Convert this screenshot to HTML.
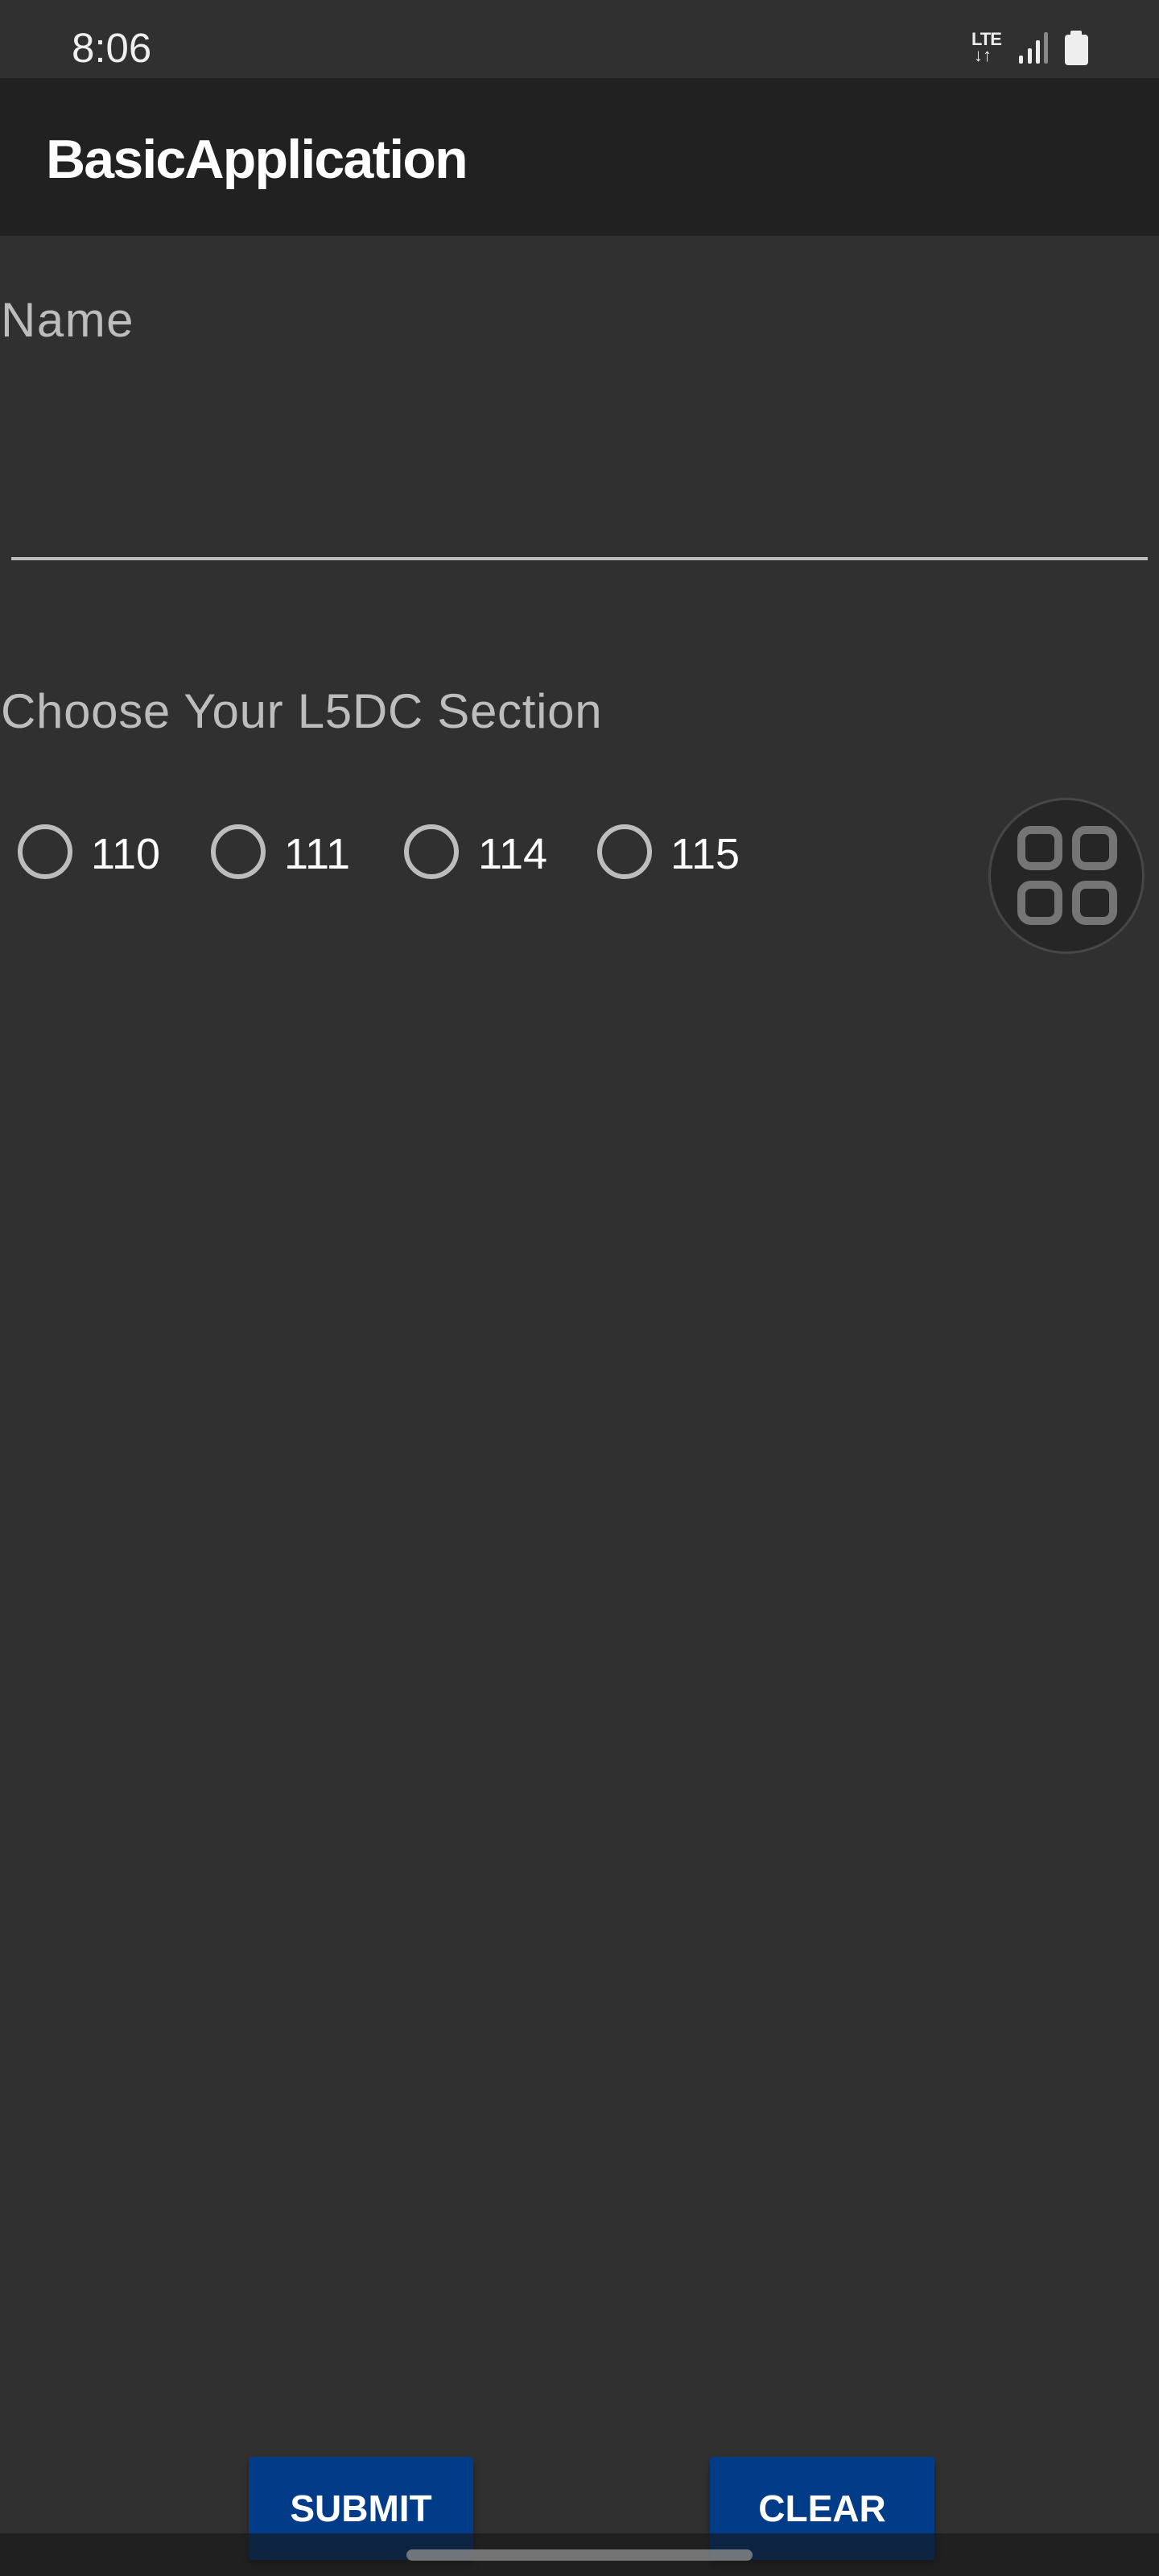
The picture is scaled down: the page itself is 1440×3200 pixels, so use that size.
<!DOCTYPE html>
<html><head><meta charset="utf-8"><style>
html,body{margin:0;padding:0;}
body{width:1440px;height:3200px;background:#303030;position:relative;overflow:hidden;font-family:"Liberation Sans",sans-serif;}
.a{position:absolute;white-space:nowrap;}
.rad{position:absolute;width:68px;height:68px;border:6px solid #bdbdbd;border-radius:50%;box-sizing:border-box;}
.num{position:absolute;color:#fff;font-size:54px;line-height:1;}
.btn{position:absolute;top:3052px;height:128px;width:279px;background:#023c88;border-radius:4px;color:#fff;font-size:46px;font-weight:bold;text-align:center;line-height:128px;box-shadow:0 6px 8px rgba(0,0,0,.35);}
.sq{position:absolute;width:56px;height:55px;border:10px solid #757575;border-radius:17px;box-sizing:border-box;}
</style></head><body>
<div class="a" style="left:0;top:0;width:1440px;height:97px;background:#303030"></div>
<div class="a" style="left:89px;top:32px;color:#eee;font-size:51px;line-height:56px">8:06</div>
<div class="a" style="left:1207px;top:38px;color:#eee;font-size:22px;font-weight:bold;line-height:22px;letter-spacing:-1px">LTE</div>
<div class="a" style="left:1210px;top:58px;color:#eee;font-size:22px;font-weight:bold;line-height:22px">↓↑</div>
<div class="a" style="left:1266px;top:69px;width:5px;height:10px;background:#eee;border-radius:2px"></div>
<div class="a" style="left:1277px;top:60px;width:5px;height:19px;background:#eee;border-radius:2px"></div>
<div class="a" style="left:1287px;top:50px;width:5px;height:29px;background:#eee;border-radius:2px"></div>
<div class="a" style="left:1297px;top:40px;width:5px;height:39px;background:#888;border-radius:2px"></div>
<div class="a" style="left:1330px;top:38px;width:14px;height:6px;background:#eee;border-radius:2px 2px 0 0"></div>
<div class="a" style="left:1323px;top:43px;width:29px;height:38px;background:#eee;border-radius:4px"></div>

<div class="a" style="left:0;top:97px;width:1440px;height:196px;background:#212121"></div>
<div class="a" style="left:57px;top:160px;color:#fff;font-size:68px;font-weight:bold;line-height:76px;letter-spacing:-1.8px">BasicApplication</div>

<div class="a" style="left:1px;top:364px;color:#bdbdbd;font-size:60px;line-height:68px;letter-spacing:1.5px">Name</div>
<div class="a" style="left:14px;top:692px;width:1412px;height:4px;background:#bdbdbd"></div>
<div class="a" style="left:1px;top:850px;color:#bdbdbd;font-size:60px;line-height:68px;letter-spacing:0.7px">Choose Your L5DC Section</div>

<div class="rad" style="left:22px;top:1024px"></div><div class="num" style="left:113px;top:1034px">110</div>
<div class="rad" style="left:262px;top:1024px"></div><div class="num" style="left:353px;top:1034px">111</div>
<div class="rad" style="left:502px;top:1024px"></div><div class="num" style="left:594px;top:1034px">114</div>
<div class="rad" style="left:742px;top:1024px"></div><div class="num" style="left:833px;top:1034px">115</div>

<div class="a" style="left:1228px;top:991px;width:194px;height:194px;border-radius:50%;background:#262626;border:3px solid #474747;box-sizing:border-box"></div>
<div class="sq" style="left:1264px;top:1026px"></div>
<div class="sq" style="left:1332px;top:1026px"></div>
<div class="sq" style="left:1264px;top:1094px"></div>
<div class="sq" style="left:1332px;top:1094px"></div>

<div class="btn" style="left:309px">SUBMIT</div>
<div class="btn" style="left:882px">CLEAR</div>
<div class="a" style="left:0;top:3147px;width:1440px;height:53px;background:rgba(22,22,22,.6)"></div>
<div class="a" style="left:505px;top:3167px;width:430px;height:14px;background:#8a8a8a;opacity:.8;border-radius:7px"></div>
</body></html>
